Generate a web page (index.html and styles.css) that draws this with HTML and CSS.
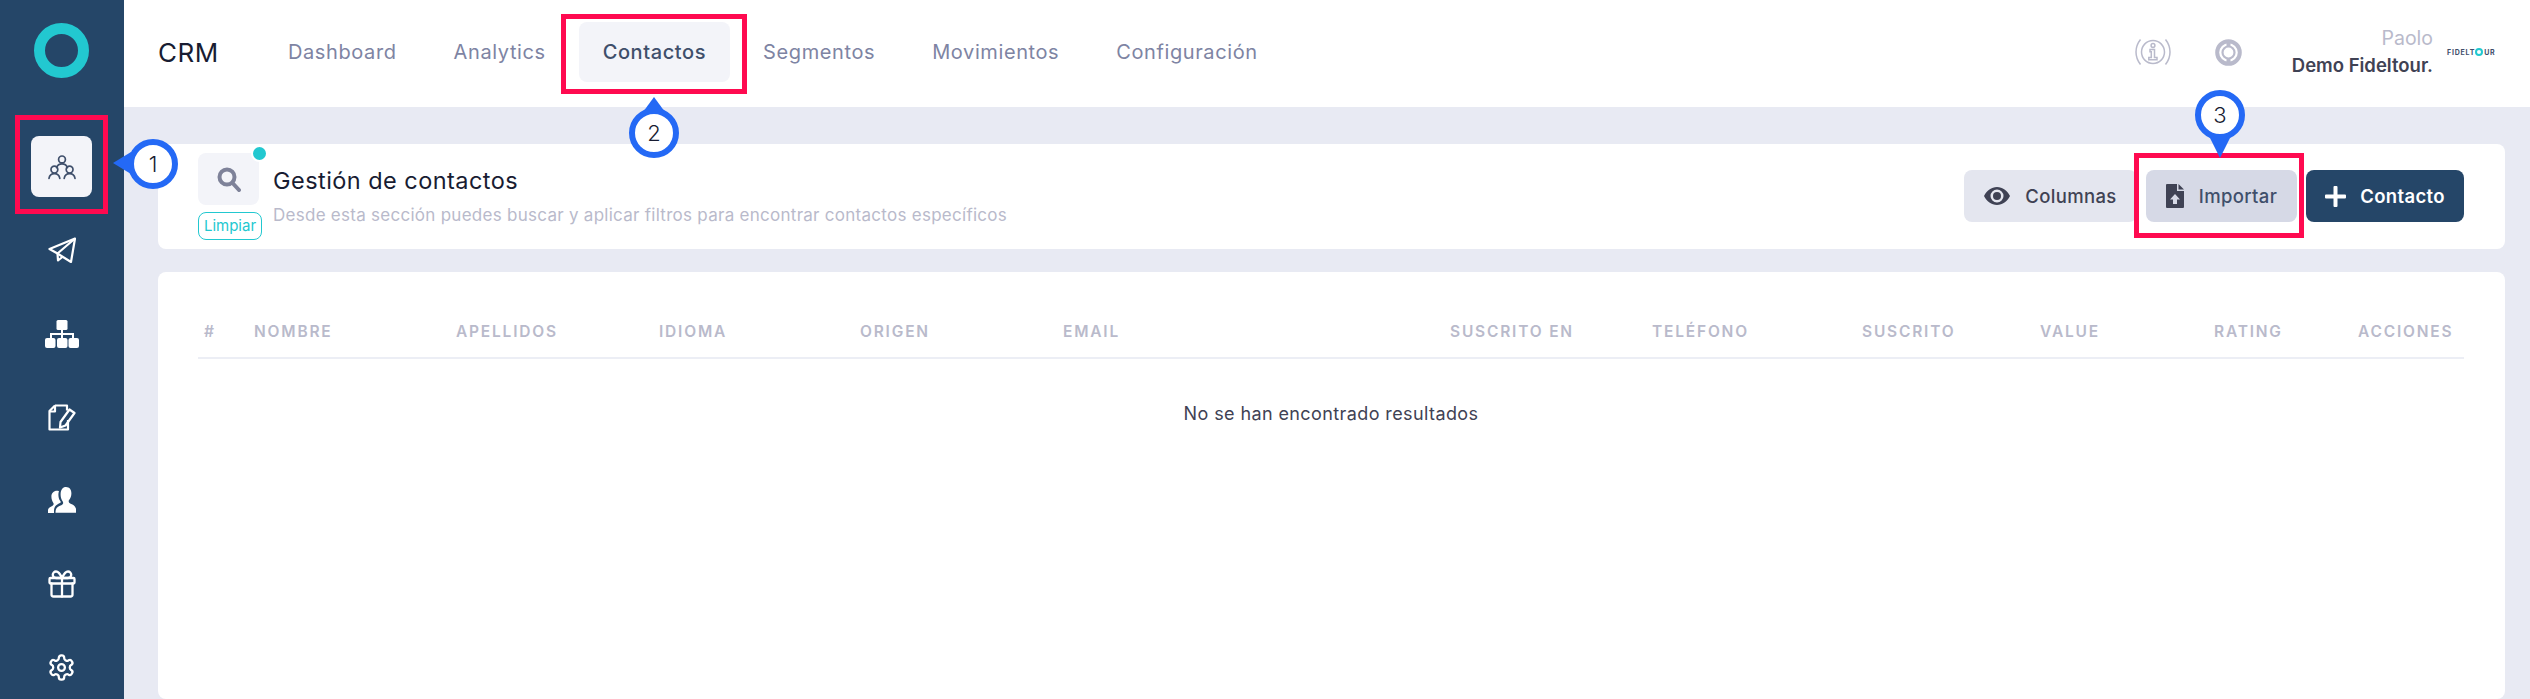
FILE: index.html
```html
<!DOCTYPE html>
<html lang="es">
<head>
    <meta charset="UTF-8">
    <meta name="viewport" content="width=device-width, initial-scale=1.0">
    <title>CRM - Contactos</title>
    <link rel="stylesheet" href="styles.css">
</head>
<body>
    <div class="app">
        <aside class="sidebar">
            <div class="logo"><span class="logo-ring"></span></div>
            <nav class="side-nav">
                <a class="side-item active">
                    <svg width="28" height="26" viewBox="0 0 28 26" fill="none" stroke="#3f4f6b" stroke-width="1.7" stroke-linecap="round">
                        <circle cx="14" cy="5.4" r="3.4"/>
                        <path d="M8.6 13.6c.8-2.4 2.8-3.8 5.4-3.8s4.600 1.400 5.400 3.800"/>
                        <circle cx="6.400" cy="15.600" r="3.400"/>
                        <path d="M1 24.400c.5-3 2.600-4.800 5.400-4.800s4.900 1.800 5.400 4.800"/>
                        <circle cx="21.600" cy="15.600" r="3.400"/>
                        <path d="M16.200 24.400c.5-3 2.600-4.800 5.400-4.800s4.900 1.800 5.400 4.800"/>
                    </svg>
                </a>
                <a class="side-item">
                    <svg width="28" height="26" viewBox="0 0 28 26" fill="none" stroke="#fff" stroke-width="2.200" stroke-linejoin="round">
                        <path d="M27 1.500 1.500 12l8 4.500L23 25z"/>
                        <path d="M27 1.500 9.500 16.500l.5 7 5-4"/>
                    </svg>
                </a>
                <a class="side-item">
                    <svg width="34" height="28" viewBox="0 0 34 28" fill="#fff">
                        <rect x="11.500" y="0" width="11" height="10" rx="1.500"/>
                        <path d="M16 10h2v3h11v6h-2v-4H18v4h-2v-4H7v4H5v-6h11z"/>
                        <rect x="0" y="18" width="10.500" height="10" rx="2"/>
                        <rect x="12" y="18" width="10.500" height="10" rx="2"/>
                        <rect x="23.500" y="18" width="10.500" height="10" rx="2"/>
                    </svg>
                </a>
                <a class="side-item">
                    <svg width="28" height="27" viewBox="0 0 28 27" fill="none" stroke="#fff" stroke-width="2.200" stroke-linejoin="round">
                        <path d="M7 1.500h12v5M7 1.500 1.500 7v18.500H20V16"/>
                        <path d="M1.500 7.500H7v-6"/>
                        <path d="M21.500 5.500l5 3.500-9 12.500-5.500 2 .5-5.500z"/>
                    </svg>
                </a>
                <a class="side-item">
                    <svg width="28" height="26" viewBox="0 0 28 26" fill="#fff">
                        <path d="M18 0c3.600 0 5.400 2.800 5.400 6.200 0 2.600-.8 5.400-2.500 7-.5 1.300-.2 2.400 1.300 3.200 2.400 1.200 5 1.900 5.800 5.400l.2 3.900H7.500c.1-3 .6-5 3-6.300 2-1.100 4-1.500 4.600-3 .3-1.200-.2-2-1-3-1.100-1.500-1.500-3.900-1.500-5.800C12.600 2.500 14.800 0 18 0z"/>
                        <path d="M9 3.800c.7 0 1.400.1 2 .4-.4 1-.6 2-.6 3.200 0 2.200.5 4.800 1.700 6.400.5.700.8 1.100.7 1.500-.4.900-2 1.300-3.500 2.200-2.300 1.300-3.200 3.400-3.300 6.200V26H0v-3c.4-2.500 2.400-3.200 4.200-4.100 1.300-.7 1.700-1.500 1.300-2.700C4 14 3.400 11.700 3.400 9.500 3.400 6.300 5.700 3.800 9 3.800z"/>
                    </svg>
                </a>
                <a class="side-item">
                    <svg width="28" height="28" viewBox="0 0 28 28" fill="none" stroke="#fff" stroke-width="2.300" stroke-linejoin="round" stroke-linecap="round">
                        <rect x="1.500" y="8" width="25" height="5.500" rx="1"/>
                        <path d="M3.500 13.500v11a2 2 0 0 0 2 2h17a2 2 0 0 0 2-2v-11"/>
                        <path d="M14 8v18.500"/>
                        <path d="M14 8c-2-4.500-4-6.500-6-6.500a3.200 3.200 0 0 0 0 6.500zM14 8c2-4.500 4-6.500 6-6.500a3.200 3.200 0 0 1 0 6.500z"/>
                    </svg>
                </a>
                <a class="side-item">
                    <svg width="29" height="29" viewBox="0 0 24 24" fill="none" stroke="#fff" stroke-width="1.900" stroke-linejoin="round">
                        <path d="M12.220 2h-.44a2 2 0 0 0-2 2v.18a2 2 0 0 1-1 1.730l-.43.25a2 2 0 0 1-2 0l-.15-.08a2 2 0 0 0-2.730.73l-.22.38a2 2 0 0 0 .73 2.730l.15.1a2 2 0 0 1 1 1.720v.51a2 2 0 0 1-1 1.740l-.15.09a2 2 0 0 0-.73 2.730l.22.38a2 2 0 0 0 2.730.73l.15-.08a2 2 0 0 1 2 0l.43.25a2 2 0 0 1 1 1.730V20a2 2 0 0 0 2 2h.44a2 2 0 0 0 2-2v-.18a2 2 0 0 1 1-1.730l.43-.25a2 2 0 0 1 2 0l.15.08a2 2 0 0 0 2.730-.73l.22-.39a2 2 0 0 0-.73-2.730l-.15-.08a2 2 0 0 1-1-1.740v-.5a2 2 0 0 1 1-1.740l.15-.09a2 2 0 0 0 .73-2.730l-.22-.38a2 2 0 0 0-2.730-.73l-.15.08a2 2 0 0 1-2 0l-.43-.25a2 2 0 0 1-1-1.730V4a2 2 0 0 0-2-2z"/>
                        <circle cx="12" cy="12" r="2.800"/>
                    </svg>
                </a>
            </nav>
        </aside>

        <main class="main">
            <header class="topbar">
                <div class="brand">CRM</div>
                <nav class="top-nav">
                    <a class="top-item">Dashboard</a>
                    <a class="top-item">Analytics</a>
                    <a class="top-item active">Contactos</a>
                    <a class="top-item">Segmentos</a>
                    <a class="top-item">Movimientos</a>
                    <a class="top-item">Configuración</a>
                </nav>
                <div class="top-right">
                    <svg class="info-icon" width="36" height="28" viewBox="0 0 36 28" fill="none" stroke="#b9bacb" stroke-width="1.500">
                        <circle cx="18" cy="14" r="11.500"/>
                        <path d="M5.500 1.500C-.5 9-.5 19 5.500 26.500M30.500 1.500c6 7.500 6 17.500 0 25"/>
                        <circle cx="18" cy="7.500" r="1.900"/>
                        <path d="M15 11.500h4.500v8H22v2.300h-8.200v-2.300h2.500v-5.700H15z"/>
                    </svg>
                    <svg class="ring-icon" width="27" height="27" viewBox="0 0 27 27" fill="none" stroke="#b9bacb">
                        <circle cx="13.500" cy="13.500" r="11.300" stroke-width="4"/>
                        <circle cx="13.500" cy="13.500" r="6" stroke-width="2.200"/>
                        <path d="M13.500 2v5M13.500 20v5" stroke-width="4"/>
                    </svg>
                    <div class="user">
                        <div class="user-name">Paolo</div>
                        <div class="user-company">Demo Fideltour.</div>
                    </div>
                    <div class="mini-logo">FIDELT<span class="mini-ring"></span>UR</div>
                </div>
            </header>

            <section class="content">
                <div class="card filters">
                    <div class="search-box">
                        <div class="search-tile">
                            <svg width="24" height="25" viewBox="0 0 24 25" fill="none" stroke="#7e8299" stroke-linecap="round">
                                <circle cx="10" cy="10" r="7.500" stroke-width="4"/>
                                <path d="M16 16.500l6 6.500" stroke-width="4"/>
                            </svg>
                            <span class="search-dot"></span>
                        </div>
                        <div class="clear-pill">Limpiar</div>
                    </div>
                    <div class="filters-text">
                        <h2>Gestión de contactos</h2>
                        <p>Desde esta sección puedes buscar y aplicar filtros para encontrar contactos específicos</p>
                    </div>
                    <div class="actions">
                        <button class="btn btn-light">
                            <svg width="26" height="18" viewBox="0 0 26 18" fill="#3f4254">
                                <path fill-rule="evenodd" d="M13 0c5.600 0 10.200 3.700 13 9-2.800 5.300-7.400 9-13 9S2.800 14.300 0 9c2.800-5.300 7.400-9 13-9zm0 2.500a6.500 6.500 0 1 0 0 13 6.500 6.500 0 0 0 0-13z"/>
                                <circle cx="13" cy="9" r="4"/>
                            </svg>
                            <span>Columnas</span>
                        </button>
                        <button class="btn btn-grey">
                            <svg width="18" height="24" viewBox="0 0 18 24" fill="#3f4254">
                                <path fill-rule="evenodd" d="M1 0h10v7h7v16a1 1 0 0 1-1 1H1a1 1 0 0 1-1-1V1a1 1 0 0 1 1-1zm8 10-5 5.500h3V20h4v-4.500h3z"/>
                                <path d="M12.500 0 18 5.500h-5.500z"/>
                            </svg>
                            <span>Importar</span>
                        </button>
                        <button class="btn btn-dark">
                            <svg width="21" height="21" viewBox="0 0 21 21" fill="#fff">
                                <path d="M8.500 1a1 1 0 0 1 1-1h2a1 1 0 0 1 1 1v7.500H20a1 1 0 0 1 1 1v2a1 1 0 0 1-1 1h-7.500V20a1 1 0 0 1-1 1h-2a1 1 0 0 1-1-1v-7.500H1a1 1 0 0 1-1-1v-2a1 1 0 0 1 1-1h7.500z"/>
                            </svg>
                            <span>Contacto</span>
                        </button>
                    </div>
                </div>

                <div class="card results">
                    <div class="table-head">
                        <span>#</span>
                        <span>Nombre</span>
                        <span>Apellidos</span>
                        <span>Idioma</span>
                        <span>Origen</span>
                        <span>Email</span>
                        <span>Suscrito en</span>
                        <span>Teléfono</span>
                        <span>Suscrito</span>
                        <span>Value</span>
                        <span>Rating</span>
                        <span>Acciones</span>
                    </div>
                    <p class="empty">No se han encontrado resultados</p>
                </div>
            </section>
        </main>
    </div>

    <!-- annotations drawn over the screenshot -->
    <div class="mark mark-1"></div>
    <div class="mark mark-2"></div>
    <div class="mark mark-3"></div>
    <div class="pin pin-left">1</div>
    <div class="pin pin-up">2</div>
    <div class="pin pin-down">3</div>
</body>
</html>
```

FILE: styles.css
```css
* {
    box-sizing: border-box;
}
html, body {
    height: 100%;
    margin: 0;
    overflow: hidden;
}
body {
    position: relative;
    font-family: Inter, "Open Sans", sans-serif;
    color: #3f4254;
    background-color: #e8eaf3;
}
.app {
    display: flex;
    height: 100%;
}

/* sidebar */
.sidebar {
    width: 124px;
    flex-shrink: 0;
    padding-right: 1px;
    background-color: #254668;
}
.logo {
    height: 125.300px;
    padding-top: 23px;
    display: flex;
    justify-content: center;
}
.logo-ring {
    width: 55px;
    height: 55px;
    border: 11px solid #22c8d0;
    border-radius: 50%;
}
.side-nav {
    display: flex;
    flex-direction: column;
    align-items: center;
}
.side-item {
    width: 61px;
    height: 61px;
    margin: 11.200px 0;
    border-radius: 8px;
    display: flex;
    align-items: center;
    justify-content: center;
}
.side-item.active {
    background-color: #f3f4f9;
}

/* top bar */
.main {
    flex: 1;
    min-width: 0;
    display: flex;
    flex-direction: column;
}
.topbar {
    height: 107px;
    flex-shrink: 0;
    background-color: #fff;
    display: flex;
    align-items: center;
    padding: 0 35px 3px 34px;
}
.brand {
    width: 106px;
    font-size: 26px;
    font-weight: 400;
    letter-spacing: .5px;
    color: #181c32;
}
.top-nav {
    display: flex;
    gap: 9px;
}
.top-item {
    height: 60px;
    padding: 0 24px;
    border-radius: 8px;
    display: flex;
    align-items: center;
    font-size: 20px;
    letter-spacing: .6px;
    color: #7e84a3;
}
.top-item.active {
    background-color: #f3f4f9;
    color: #3f4f6b;
    font-weight: 500;
}
.top-right {
    margin-left: auto;
    display: flex;
    align-items: center;
}
.info-icon {
    margin-right: 44px;
}
.ring-icon {
    margin-right: 50px;
}
.user {
    text-align: right;
    margin-right: 14px;
}
.user-name {
    font-size: 19.500px;
    line-height: 27px;
    color: #b9bacb;
}
.user-company {
    font-size: 18.500px;
    line-height: 27px;
    font-weight: 600;
    color: #3f4254;
}
.mini-logo {
    width: 48px;
    flex-shrink: 0;
    display: flex;
    align-items: center;
    font-size: 7px;
    font-weight: 700;
    letter-spacing: .8px;
    color: #3f4f6b;
}
.mini-ring {
    width: 8px;
    height: 8px;
    margin-right: 1px;
    border: 2px solid #22c8d0;
    border-radius: 50%;
    flex-shrink: 0;
}

/* content */
.content {
    flex: 1;
    display: flex;
    flex-direction: column;
    gap: 23px;
    padding: 37px 25px 0 34px;
}
.card {
    background-color: #fff;
    border-radius: 8px;
}
.filters {
    height: 105px;
    display: flex;
    padding: 9px 41px 0 40px;
}
.search-box {
    width: 76px;
    flex-shrink: 0;
}
.search-tile {
    position: relative;
    width: 61px;
    height: 52px;
    border-radius: 8px;
    background-color: #f3f4f9;
    display: flex;
    align-items: center;
    justify-content: center;
    padding-top: 1px;
}
.search-dot {
    position: absolute;
    top: -8.500px;
    right: -8.500px;
    width: 17px;
    height: 17px;
    border: 2px solid #fff;
    border-radius: 50%;
    background-color: #22c8d0;
}
.clear-pill {
    width: 64px;
    height: 28px;
    margin-top: 7px;
    border: 1.500px solid #22c8d0;
    border-radius: 8px;
    font-size: 15px;
    line-height: 25px;
    text-align: center;
    color: #22c8d0;
}
.filters-text {
    padding-top: 13px;
    margin-left: -1px;
}
.filters-text h2 {
    margin: 0;
    font-size: 23.500px;
    line-height: 30px;
    font-weight: 400;
    letter-spacing: .45px;
    color: #181c32;
}
.filters-text p {
    margin: 7px 0 0;
    font-size: 17px;
    line-height: 24px;
    letter-spacing: .27px;
    color: #b9bacb;
}
.actions {
    margin-left: auto;
    display: flex;
    gap: 9px;
    padding-top: 17px;
}
.btn {
    height: 52px;
    border: 0;
    border-radius: 8px;
    display: flex;
    align-items: center;
    justify-content: center;
    font-family: inherit;
    font-size: 18.500px;
    font-weight: 500;
    letter-spacing: .35px;
    color: #3f4254;
}
.btn-light {
    width: 173px;
    gap: 15px;
    background-color: #e4e6ef;
}
.btn-grey {
    width: 151px;
    gap: 15px;
    background-color: #d6d9e6;
    color: #3f4f6b;
}
.btn-dark {
    width: 158px;
    gap: 14px;
    background-color: #254668;
    color: #fff;
    font-weight: 600;
}

/* table */
.results {
    flex: 1;
    padding: 32px 41px 0 40px;
}
.table-head {
    height: 55px;
    display: grid;
    grid-template-columns: 50px 202px 203px 201px 203px 387px 202px 210px 178px 174px 144px 1fr;
    align-items: center;
    padding: 2px 0 0 6px;
    border-bottom: 2px solid #eceef5;
    font-size: 15.500px;
    font-weight: 600;
    letter-spacing: 1.800px;
    text-transform: uppercase;
    color: #b9bacb;
}
.empty {
    margin: 42px 0 0;
    font-size: 18px;
    line-height: 26px;
    letter-spacing: .4px;
    text-align: center;
    color: #3f4254;
}

/* annotations */
.mark {
    position: absolute;
    border: 5px solid #ff0a50;
}
.mark-1 {
    left: 15px;
    top: 115px;
    width: 93px;
    height: 99px;
}
.mark-2 {
    left: 561px;
    top: 14px;
    width: 186px;
    height: 80px;
}
.mark-3 {
    left: 2134px;
    top: 153px;
    width: 170px;
    height: 85px;
}
.pin {
    position: absolute;
    width: 50px;
    height: 50px;
    border: 6px solid #2469f5;
    border-radius: 50%;
    background-color: #fff;
    display: flex;
    align-items: center;
    justify-content: center;
    font-size: 22px;
    font-weight: 300;
    color: #181c32;
}
.pin::after {
    content: "";
    position: absolute;
    width: 0;
    height: 0;
    border: 0 solid transparent;
}
.pin-left {
    left: 128px;
    top: 139px;
}
.pin-left::after {
    left: -21px;
    top: 7px;
    border-width: 11px 18px 11px 0;
    border-right-color: #2469f5;
}
.pin-up {
    left: 629px;
    top: 108px;
}
.pin-up::after {
    left: 8px;
    top: -17px;
    border-width: 0 11px 15px 11px;
    border-bottom-color: #2469f5;
}
.pin-down {
    left: 2195px;
    top: 90px;
}
.pin-down::after {
    left: 8px;
    bottom: -24px;
    border-width: 22px 11px 0 11px;
    border-top-color: #2469f5;
}
```
